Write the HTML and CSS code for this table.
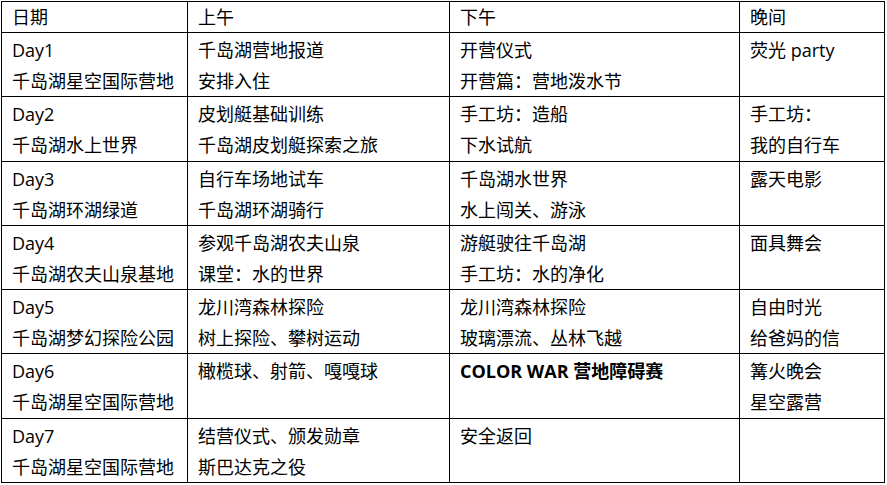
FILE: index.html
```html
<!DOCTYPE html>
<html lang="zh-CN">
<head>
<meta charset="utf-8">
<title>行程表</title>
<link rel="stylesheet" href="styles.css">
</head>
<body>
<table class="schedule">
  <colgroup>
    <col class="c-date">
    <col class="c-am">
    <col class="c-pm">
    <col class="c-eve">
  </colgroup>
  <thead>
    <tr class="head-row">
      <th><div>日期</div></th>
      <th><div>上午</div></th>
      <th><div>下午</div></th>
      <th><div>晚间</div></th>
    </tr>
  </thead>
  <tbody>
    <tr>
      <td><div>Day1</div><div>千岛湖星空国际营地</div></td>
      <td><div>千岛湖营地报道</div><div>安排入住</div></td>
      <td><div>开营仪式</div><div>开营篇：营地泼水节</div></td>
      <td><div>荧光 party</div></td>
    </tr>
    <tr>
      <td><div>Day2</div><div>千岛湖水上世界</div></td>
      <td><div>皮划艇基础训练</div><div>千岛湖皮划艇探索之旅</div></td>
      <td><div>手工坊：造船</div><div>下水试航</div></td>
      <td><div>手工坊：</div><div>我的自行车</div></td>
    </tr>
    <tr>
      <td><div>Day3</div><div>千岛湖环湖绿道</div></td>
      <td><div>自行车场地试车</div><div>千岛湖环湖骑行</div></td>
      <td><div>千岛湖水世界</div><div>水上闯关、游泳</div></td>
      <td><div>露天电影</div></td>
    </tr>
    <tr>
      <td><div>Day4</div><div>千岛湖农夫山泉基地</div></td>
      <td><div>参观千岛湖农夫山泉</div><div>课堂：水的世界</div></td>
      <td><div>游艇驶往千岛湖</div><div>手工坊：水的净化</div></td>
      <td><div>面具舞会</div></td>
    </tr>
    <tr>
      <td><div>Day5</div><div>千岛湖梦幻探险公园</div></td>
      <td><div>龙川湾森林探险</div><div>树上探险、攀树运动</div></td>
      <td><div>龙川湾森林探险</div><div>玻璃漂流、丛林飞越</div></td>
      <td><div>自由时光</div><div>给爸妈的信</div></td>
    </tr>
    <tr>
      <td><div>Day6</div><div>千岛湖星空国际营地</div></td>
      <td><div>橄榄球、射箭、嘎嘎球</div></td>
      <td><div class="bold">COLOR WAR 营地障碍赛</div></td>
      <td><div>篝火晚会</div><div>星空露营</div></td>
    </tr>
    <tr>
      <td><div>Day7</div><div>千岛湖星空国际营地</div></td>
      <td><div>结营仪式、颁发勋章</div><div>斯巴达克之役</div></td>
      <td><div>安全返回</div></td>
      <td></td>
    </tr>
  </tbody>
</table>
</body>
</html>
```

FILE: styles.css
```css
html, body {
  margin: 0;
  padding: 0;
  background: #ffffff;
}
body {
  padding: 1px 0 0 1px;
  font-family: "Open Sans", "Noto Sans CJK SC", sans-serif;
  font-size: 18px;
  color: #000000;
}
.schedule {
  border-collapse: collapse;
  table-layout: fixed;
  width: 883px;
}
.c-date { width: 186px; }
.c-am { width: 262px; }
.c-pm { width: 290px; }
.c-eve { width: 145px; }
.schedule th,
.schedule td {
  border: 1px solid #000000;
  text-align: left;
  vertical-align: top;
  font-weight: normal;
  padding: 2px 10px 0 10px;
  white-space: nowrap;
  overflow: hidden;
}
.schedule td div {
  height: 31px;
  line-height: 31px;
  overflow: visible;
}
.schedule td div + div {
  height: 30px;
}
.schedule th {
  padding: 0 10px;
}
.schedule th div {
  height: 30px;
  line-height: 30px;
}
.schedule tbody tr {
  height: 64.3px;
}
.bold {
  font-weight: 700;
}
```
